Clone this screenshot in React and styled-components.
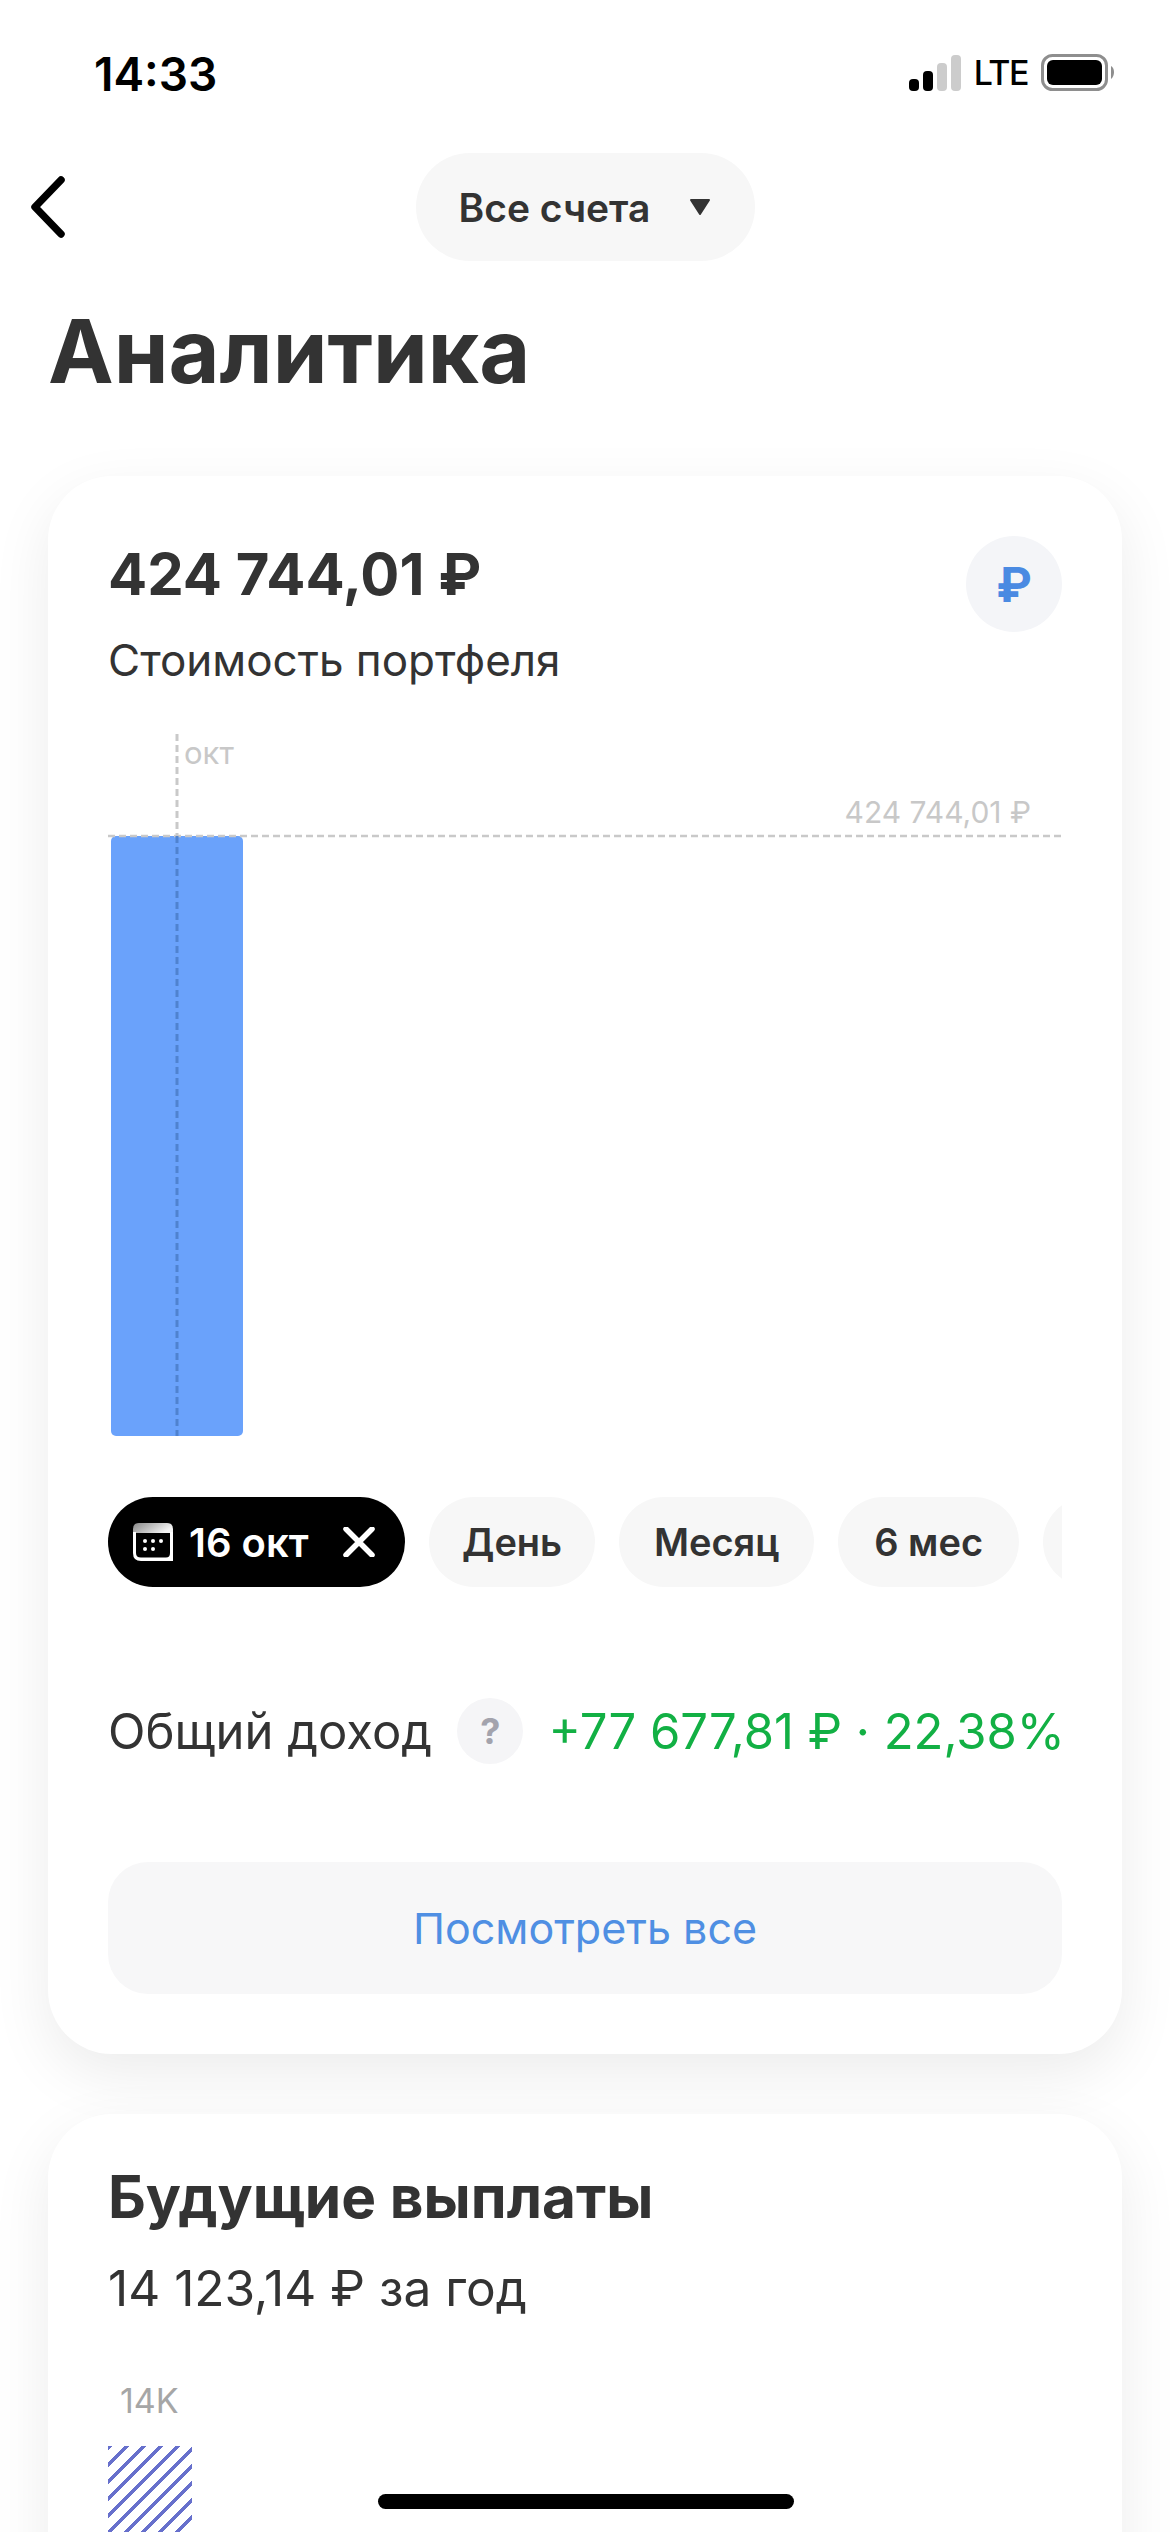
import React from 'react';
import styled, { createGlobalStyle } from 'styled-components';

const GlobalStyle = createGlobalStyle`
  html, body {
    margin: 0;
    padding: 0;
    background: #fff;
  }
  * {
    box-sizing: border-box;
  }
`;

const Screen = styled.div`
  position: relative;
  width: 1170px;
  height: 2532px;
  overflow: hidden;
  background: #fff;
  font-family: Inter, "Liberation Sans", sans-serif;
  color: #333;
`;

const StatusBar = styled.div`
  height: 153px;
  padding: 48px 53px 0 94px;
  display: flex;
  align-items: flex-start;
  justify-content: space-between;
`;

const Time = styled.div`
  font-size: 46px;
  line-height: 52px;
  font-weight: 600;
  color: #000;
`;

const StatusIcons = styled.div`
  display: flex;
  align-items: center;
  gap: 13px;
  height: 50px;
`;

const Lte = styled.span`
  font-size: 34px;
  letter-spacing: -1.5px;
  font-weight: 500;
  color: #000;
  line-height: 40px;
`;

const NavBar = styled.div`
  height: 108px;
  display: grid;
  grid-template-columns: 1fr auto 1fr;
  align-items: center;
  padding: 0 28px;
`;

const AccountPill = styled.div`
  height: 108px;
  width: 339px;
  border-radius: 54px;
  background: #f7f7f7;
  display: flex;
  align-items: center;
  padding-left: 43px;
  gap: 38px;
  font-size: 39px;
  font-weight: 600;
`;

const Title = styled.h1`
  margin: 36px 0 0 48px;
  font-size: 88px;
  line-height: 108px;
  font-weight: 700;
  color: #333;
`;

const Card = styled.section`
  margin: ${p => p.$top}px 48px 0;
  padding: 60px;
  background: #fff;
  border-radius: 64px;
  box-shadow: 0 20px 60px rgba(0, 0, 0, 0.08);
`;

const CardHead = styled.div`
  display: flex;
  justify-content: space-between;
  align-items: flex-start;
`;

const Amount = styled.div`
  margin-top: 2px;
  font-size: 58px;
  line-height: 72px;
  font-weight: 700;
`;

const SubText = styled.div`
  font-size: ${p => p.$size}px;
  line-height: 56px;
  font-weight: 400;
  margin-top: ${p => p.$top}px;
`;

const CurrencyBadge = styled.div`
  width: 96px;
  height: 96px;
  border-radius: 50%;
  background: #f4f5f8;
  color: #4a8ae2;
  font-size: 48px;
  font-weight: 700;
  display: flex;
  align-items: center;
  justify-content: center;
`;

const ChartWrap = styled.div`
  margin-top: 46px;
  height: 705px;
`;

const ChipRow = styled.div`
  margin-top: 58px;
  display: flex;
  gap: 24px;
  width: 954px;
  overflow: hidden;
`;

const Chip = styled.div`
  flex: none;
  height: 90px;
  min-width: ${p => p.$minWidth || 0}px;
  border-radius: 45px;
  padding: 0 33px;
  background: ${p => (p.$active ? '#000' : '#f7f7f7')};
  color: ${p => (p.$active ? '#fff' : '#333')};
  display: flex;
  align-items: center;
  justify-content: center;
  font-size: 38px;
  font-weight: 600;
`;

const DateChip = styled(Chip)`
  width: 297px;
  padding: 0 30px 0 25px;
  font-size: 40px;
`;

const ChipDate = styled.span`
  margin-right: auto;
  padding-left: 16px;
`;

const IncomeRow = styled.div`
  margin-top: 111px;
  display: flex;
  align-items: center;
  justify-content: space-between;
  height: 66px;
`;

const IncomeLabel = styled.div`
  font-size: 49px;
  font-weight: 400;
`;

const HelpBadge = styled.div`
  width: 66px;
  height: 66px;
  border-radius: 50%;
  background: #f5f5f7;
  color: #a3a3ad;
  font-size: 36px;
  font-weight: 700;
  display: flex;
  align-items: center;
  justify-content: center;
`;

const IncomeValue = styled.div`
  margin-right: -3px;
  font-size: 49px;
  font-weight: 400;
  color: #12b044;
`;

const ViewAllButton = styled.div`
  margin-top: 98px;
  height: 132px;
  border-radius: 40px;
  background: #f7f7f8;
  color: #4f8fe3;
  font-size: 43px;
  font-weight: 400;
  display: flex;
  align-items: center;
  justify-content: center;
`;

const CardTitle = styled.h2`
  margin: -11px 0 0;
  font-size: 58.5px;
  line-height: 68px;
  font-weight: 700;
`;

const ForecastLabel = styled.div`
  margin: 65px 0 0 12px;
  font-size: 34px;
  line-height: 40px;
  color: #a6a6a6;
`;

const HatchBar = styled.div`
  margin-top: 25px;
  width: 84px;
  height: 120px;
  background: repeating-linear-gradient(
    135deg,
    #6770cc 0 3.5px,
    transparent 3.5px 12px
  );
`;

const HomeIndicator = styled.div`
  position: absolute;
  left: 378px;
  top: 2494px;
  width: 416px;
  height: 15px;
  border-radius: 8px;
  background: #000;
`;

const SignalIcon = () => (
  <svg width="52" height="36" viewBox="0 0 52 36">
    <rect x="0" y="24" width="10" height="12" rx="4" fill="#000" />
    <rect x="14" y="16" width="10" height="20" rx="4" fill="#000" />
    <rect x="28" y="8" width="10" height="28" rx="4" fill="#ccc" />
    <rect x="42" y="0" width="10" height="36" rx="4" fill="#ccc" />
  </svg>
);

const BatteryIcon = () => (
  <svg width="76" height="38" viewBox="0 0 76 38">
    <rect x="1.5" y="1.5" width="64" height="34" rx="10" fill="none" stroke="#8e8e8e" strokeWidth="3" />
    <rect x="6" y="6" width="55" height="25" rx="6" fill="#000" />
    <path d="M70 12 C74 14 74 22 70 25 Z" fill="#8e8e8e" />
  </svg>
);

const BackIcon = () => (
  <svg width="40" height="64" viewBox="0 0 40 64">
    <path d="M33 5 L7 32 L33 59" fill="none" stroke="#000" strokeWidth="7.5" strokeLinecap="round" strokeLinejoin="round" />
  </svg>
);

const CaretIcon = () => (
  <svg width="24" height="20" viewBox="0 0 24 20">
    <path d="M3 3 H21 L12 17 Z" fill="#333" stroke="#333" strokeWidth="2" strokeLinejoin="round" />
  </svg>
);

const CalendarIcon = () => (
  <svg width="40" height="38" viewBox="0 0 40 38">
    <defs>
      <linearGradient id="calTop" x1="0" y1="0" x2="1" y2="0.4">
        <stop offset="0" stopColor="#888" />
        <stop offset="1" stopColor="#f4f4f4" />
      </linearGradient>
    </defs>
    <path d="M6 0 H34 Q40 0 40 6 V10 H0 V6 Q0 0 6 0 Z" fill="url(#calTop)" />
    <path d="M0 9 V30 Q0 38 8 38 H40 V9 H37 V30 Q37 34.5 33 34.5 H8 Q3 34.5 3 30 V9 Z" fill="#fff" />
    {[[12, 18], [20, 18], [28, 18], [12, 26], [20, 26]].map(([cx, cy]) => (
      <circle key={`${cx}-${cy}`} cx={cx} cy={cy} r="2" fill="#fff" />
    ))}
  </svg>
);

const CloseIcon = () => (
  <svg width="32" height="30" viewBox="0 0 32 30">
    <path d="M3 2 L29 28 M29 2 L3 28" stroke="#fff" strokeWidth="5.5" strokeLinecap="round" />
  </svg>
);

const PortfolioChart = () => (
  <svg width="954" height="705" viewBox="0 0 954 705" style={{ display: 'block', overflow: 'visible' }}>
    <rect x="3" y="102" width="132" height="600" rx="5" fill="#6aa2fb" />
    <line x1="0" y1="102" x2="954" y2="102" stroke="#c9c9c9" strokeWidth="2.5" strokeDasharray="7 4" />
    <line x1="69" y1="0" x2="69" y2="102" stroke="#c9c9c9" strokeWidth="3" strokeDasharray="7 4" />
    <line x1="69" y1="102" x2="69" y2="702" stroke="#4f82cf" strokeWidth="3" strokeDasharray="7 4" />
    <text x="76" y="30" fontSize="31" fill="#c8c8c8" fontFamily="Inter, sans-serif">окт</text>
    <text x="923" y="89" fontSize="30" fill="#c8c8c8" textAnchor="end" fontFamily="Inter, sans-serif">424 744,01 ₽</text>
  </svg>
);

export default function App() {
  return (
    <Screen>
      <GlobalStyle />
      <StatusBar>
        <Time>14:33</Time>
        <StatusIcons>
          <SignalIcon />
          <Lte>LTE</Lte>
          <BatteryIcon />
        </StatusIcons>
      </StatusBar>
      <NavBar>
        <BackIcon />
        <AccountPill>
          Все счета
          <CaretIcon />
        </AccountPill>
      </NavBar>
      <Title>Аналитика</Title>
      <Card $top={71}>
        <CardHead>
          <div>
            <Amount>424 744,01 ₽</Amount>
            <SubText $size={44} $top={22}>Стоимость портфеля</SubText>
          </div>
          <CurrencyBadge>₽</CurrencyBadge>
        </CardHead>
        <ChartWrap>
          <PortfolioChart />
        </ChartWrap>
        <ChipRow>
          <DateChip $active>
            <CalendarIcon />
            <ChipDate>16 окт</ChipDate>
            <CloseIcon />
          </DateChip>
          <Chip>День</Chip>
          <Chip $minWidth={195}>Месяц</Chip>
          <Chip $minWidth={181}>6 мес</Chip>
          <Chip $minWidth={120} />
        </ChipRow>
        <IncomeRow>
          <IncomeLabel>Общий доход</IncomeLabel>
          <HelpBadge>?</HelpBadge>
          <IncomeValue>+77 677,81 ₽ · 22,38%</IncomeValue>
        </IncomeRow>
        <ViewAllButton>Посмотреть все</ViewAllButton>
      </Card>
      <Card $top={60}>
        <CardTitle>Будущие выплаты</CardTitle>
        <SubText $size={49.6} $top={29}>14 123,14 ₽ за год</SubText>
        <ForecastLabel>14K</ForecastLabel>
        <HatchBar />
      </Card>
      <HomeIndicator />
    </Screen>
  );
}
